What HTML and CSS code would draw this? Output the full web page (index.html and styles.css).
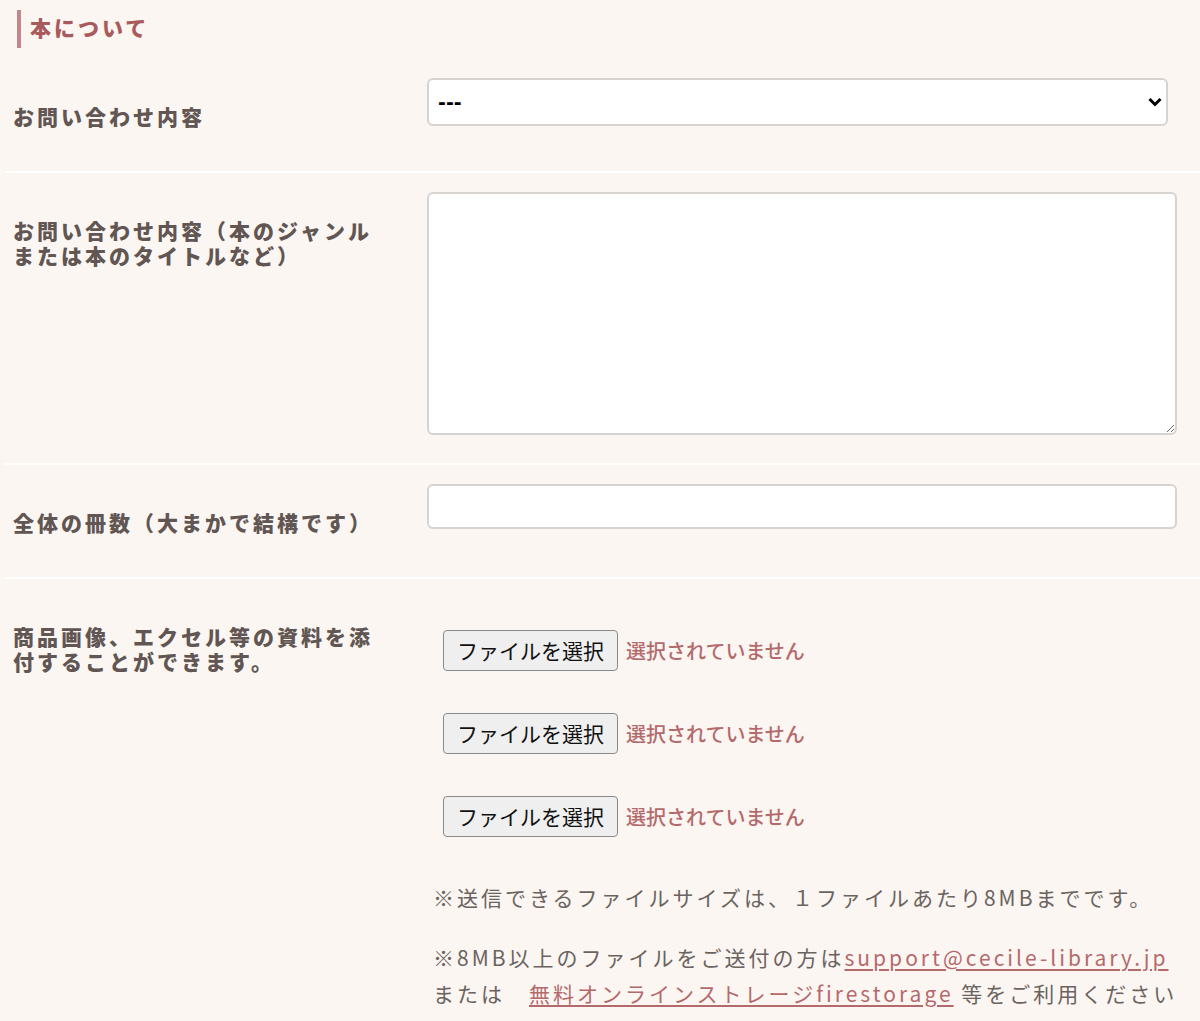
FILE: index.html
```html
<!DOCTYPE html>
<html lang="ja">
<head>
<meta charset="utf-8">
<title>本について</title>
<link rel="stylesheet" href="styles.css">
</head>
<body>
<div class="page">
  <h2 class="section-title">本について</h2>

  <div class="row">
    <div class="label">お問い合わせ内容</div>
    <div class="field">
      <div class="select-wrap">
        <select class="select"><option>---</option></select>
        <svg class="chevron" width="14" height="10" viewBox="0 0 14 10"><path d="M1.5 2 L7 7.5 L12.5 2" fill="none" stroke="#000" stroke-width="3" stroke-linejoin="miter"/></svg>
      </div>
    </div>
  </div>

  <div class="row">
    <div class="label">お問い合わせ内容（本のジャンルまたは本のタイトルなど）</div>
    <div class="field">
      <textarea class="textarea"></textarea>
    </div>
  </div>

  <div class="row">
    <div class="label">全体の冊数（大まかで結構です）</div>
    <div class="field">
      <input class="input" type="text">
    </div>
  </div>

  <div class="row row-last">
    <div class="label">商品画像、エクセル等の資料を添付することができます。</div>
    <div class="field">
      <div class="files">
        <div class="file"><span class="file-btn">ファイルを選択</span><span class="file-none">選択されていません</span></div>
        <div class="file"><span class="file-btn">ファイルを選択</span><span class="file-none">選択されていません</span></div>
        <div class="file"><span class="file-btn">ファイルを選択</span><span class="file-none">選択されていません</span></div>
      </div>
      <p class="note">※送信できるファイルサイズは、１ファイルあたり8MBまでです。</p>
      <p class="note">※8MB以上のファイルをご送付の方は<a class="link" href="#">support@cecile-library.jp</a><br>または　<a class="link" href="#">無料オンラインストレージfirestorage</a> 等をご利用ください</p>
    </div>
  </div>
</div>
</body>
</html>
```

FILE: styles.css
```css
html, body {
  margin: 0;
  padding: 0;
  background: #fbf6f2;
}
body {
  font-family: "Noto Sans CJK JP", "Noto Sans", sans-serif;
  color: #635855;
  overflow: hidden;
}
.page {
  padding-left: 5px;
}
.section-title {
  margin: 10px 0 11px 12px;
  padding-left: 9px;
  border-left: 4px solid #c4868a;
  height: 38px;
  line-height: 35px;
  font-size: 21px;
  font-weight: 900;
  letter-spacing: 3px;
  color: #a85b5c;
}
.row {
  display: grid;
  grid-template-columns: 422px 1fr;
  align-items: start;
  border-bottom: 2px solid #ffffff;
}
.row-last {
  border-bottom: none;
}
.label {
  padding: 45px 40px 42px 8px;
  font-size: 21px;
  line-height: 25px;
  font-weight: 900;
  letter-spacing: 3px;
  color: #615653;
}
.field {
  padding: 19px 0 28px 0;
}
.select-wrap {
  position: relative;
  width: 741px;
}
.select {
  display: block;
  width: 741px;
  height: 48px;
  box-sizing: border-box;
  appearance: none;
  -webkit-appearance: none;
  background: #ffffff;
  border: 2px solid #d6d3d1;
  border-radius: 6px;
  padding: 0 9px;
  font-family: "DejaVu Sans", sans-serif;
  font-size: 19px;
  font-weight: 700;
  color: #000;
}
.chevron {
  position: absolute;
  right: 6px;
  top: 19px;
}
.textarea {
  display: block;
  width: 750px;
  height: 243px;
  box-sizing: border-box;
  background: #ffffff;
  border: 2px solid #d6d3d1;
  border-radius: 6px;
  margin: 0;
  resize: both;
}
.input {
  display: block;
  width: 750px;
  height: 45px;
  box-sizing: border-box;
  background: #ffffff;
  border: 2px solid #d6d3d1;
  border-radius: 6px;
  margin: 0;
}
.files {
  padding: 32px 0 0 16px;
  display: flex;
  flex-direction: column;
  gap: 42px;
}
.file {
  display: flex;
  align-items: center;
  gap: 8px;
  height: 41px;
}
.file-btn {
  display: inline-flex;
  align-items: center;
  justify-content: center;
  box-sizing: border-box;
  width: 175px;
  height: 41px;
  padding-bottom: 2px;
  background: #efefef;
  border: 1px solid #8a8a8a;
  border-radius: 4px;
  font-size: 21px;
  color: #111;
}
.file-none {
  font-size: 20px;
  font-weight: 500;
  color: #b46a6c;
}
.note {
  margin: 42px 0 0 6px;
  font-size: 21px;
  line-height: 36px;
  letter-spacing: 3px;
  color: #6b6360;
}
.note + .note {
  margin-top: 24px;
}
.link {
  color: #b46a6c;
  text-decoration: underline;
  text-underline-offset: 3px;
}
```
